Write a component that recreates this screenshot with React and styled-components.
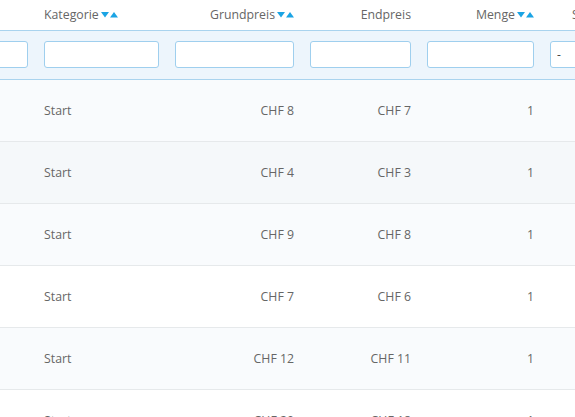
import React, { useLayoutEffect, useRef } from "react";
import styled, { createGlobalStyle } from "styled-components";

const GlobalStyle = createGlobalStyle`
  html, body {
    margin: 0;
    padding: 0;
    background: #ffffff;
  }
  body {
    font-family: "Open Sans", "Noto Sans", sans-serif;
    font-size: 12px;
    color: #666;
  }
`;

const columns = [
  { key: "produkt", label: "Produkt", width: 136, align: "left", sort: true },
  { key: "kategorie", label: "Kategorie", width: 131, align: "left", sort: true },
  { key: "grundpreis", label: "Grundpreis", width: 135, align: "right", sort: true },
  { key: "endpreis", label: "Endpreis", width: 117, align: "right", sort: false },
  { key: "menge", label: "Menge", width: 123, align: "right", sort: true },
  { key: "status", label: "Status", width: 140, align: "left", sort: true, select: true, indent: 30 },
];

const tableWidth = columns.reduce((sum, c) => sum + c.width, 0);

const rows = [
  { produkt: "Basis", kategorie: "Start", grundpreis: "CHF 8", endpreis: "CHF 7", menge: "1", status: "" },
  { produkt: "Basis", kategorie: "Start", grundpreis: "CHF 4", endpreis: "CHF 3", menge: "1", status: "" },
  { produkt: "Basis", kategorie: "Start", grundpreis: "CHF 9", endpreis: "CHF 8", menge: "1", status: "" },
  { produkt: "Basis", kategorie: "Start", grundpreis: "CHF 7", endpreis: "CHF 6", menge: "1", status: "" },
  { produkt: "Basis", kategorie: "Start", grundpreis: "CHF 12", endpreis: "CHF 11", menge: "1", status: "" },
  { produkt: "Basis", kategorie: "Start", grundpreis: "CHF 20", endpreis: "CHF 18", menge: "1", status: "" },
];

function SortArrows() {
  return (
    <Arrows width="17" height="6" viewBox="0 0 17 6">
      <polygon points="0,0 8,0 4,5.5" fill="#1ba4e4" />
      <polygon points="9,5.5 17,5.5 13,0" fill="#1ba4e4" />
    </Arrows>
  );
}

export default function App() {
  const scroller = useRef(null);

  useLayoutEffect(() => {
    if (scroller.current) scroller.current.scrollLeft = 100;
  }, []);

  return (
    <>
      <GlobalStyle />
      <Scroller ref={scroller}>
        <Table style={{ width: tableWidth }}>
          <colgroup>
            {columns.map((c) => (
              <col key={c.key} style={{ width: c.width }} />
            ))}
          </colgroup>
          <thead>
            <HeadRow>
              {columns.map((c) => (
                <HeadCell key={c.key} $align={c.align} $indent={c.indent}>
                  <HeadLabel>
                    {c.label}
                    {c.sort && <SortArrows />}
                  </HeadLabel>
                </HeadCell>
              ))}
            </HeadRow>
            <FilterRow>
              {columns.map((c) => (
                <FilterCell key={c.key}>
                  {c.select ? (
                    <FilterSelect defaultValue="-">
                      <option value="-">-</option>
                    </FilterSelect>
                  ) : (
                    <FilterInput type="text" />
                  )}
                </FilterCell>
              ))}
            </FilterRow>
          </thead>
          <tbody>
            {rows.map((r, i) => (
              <BodyRow key={i} $striped={i % 2 === 0} $hover={i === 1}>
                {columns.map((c) => (
                  <BodyCell key={c.key} $align={c.align}>
                    {r[c.key]}
                  </BodyCell>
                ))}
              </BodyRow>
            ))}
          </tbody>
        </Table>
      </Scroller>
    </>
  );
}

const Scroller = styled.div`
  width: 575px;
  height: 417px;
  overflow: hidden;
`;

const Table = styled.table`
  border-collapse: collapse;
  table-layout: fixed;
`;

const HeadRow = styled.tr`
  height: 30px;
  background: #ffffff;
`;

const HeadCell = styled.th`
  padding: 0 8px 0 ${(p) => p.$indent || 8}px;
  font-weight: 400;
  font-size: 12.3px;
  color: #666;
  text-align: ${(p) => p.$align};
  white-space: nowrap;
  vertical-align: middle;
`;

const HeadLabel = styled.span`
  display: inline-flex;
  align-items: center;
  gap: 2px;
`;

const Arrows = styled.svg`
  display: block;
  margin-top: 1px;
`;

const FilterRow = styled.tr`
  height: 49px;
  background: #edf5fc;
  border-top: 1px solid #a9d3ee;
  border-bottom: 1px solid #a9d3ee;
`;

const FilterCell = styled.td`
  padding: 0 8px;
  vertical-align: middle;
`;

const FilterInput = styled.input`
  box-sizing: border-box;
  display: block;
  width: 100%;
  height: 27px;
  border: 1px solid #9fcfee;
  border-radius: 3px;
  background: #ffffff;
  outline: none;
  padding: 0 7px;
  font-family: inherit;
  font-size: 12px;
  color: #666;
`;

const FilterSelect = styled.select`
  box-sizing: border-box;
  display: block;
  width: 100%;
  height: 27px;
  border: 1px solid #9fcfee;
  border-radius: 3px;
  background: #ffffff;
  outline: none;
  padding: 0 6px;
  appearance: none;
  font-family: inherit;
  font-size: 12px;
  color: #444;
`;

const BodyRow = styled.tr`
  height: 62px;
  background: ${(p) => (p.$hover ? "#f5f8fa" : p.$striped ? "#f9fbfd" : "#ffffff")};
  border-bottom: 1px solid #e6e9eb;
`;

const BodyCell = styled.td`
  padding: 0 8px;
  text-align: ${(p) => p.$align};
  vertical-align: middle;
  color: #666;
  font-size: 12.3px;
  white-space: nowrap;
`;
